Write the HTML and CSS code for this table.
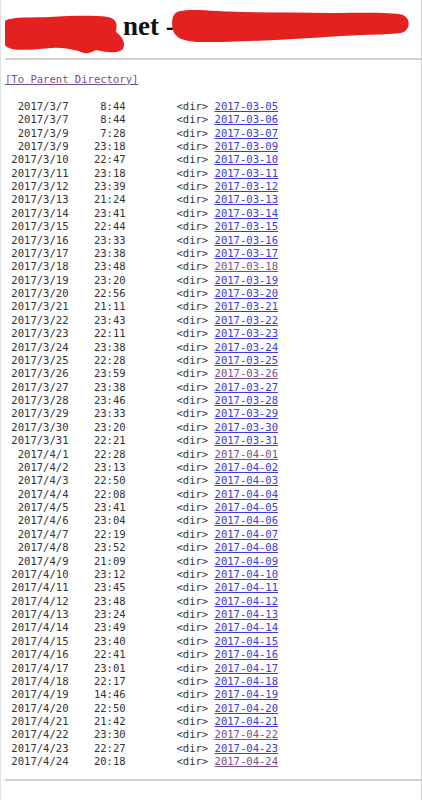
FILE: index.html
```html
<!DOCTYPE html>
<html lang="en">
<head>
    <meta charset="UTF-8">
    <meta name="viewport" content="width=device-width, initial-scale=1.0">
    <title>net - /</title>
    <link rel="stylesheet" href="styles.css">
</head>
<body>
    <h1 class="title">
        <svg class="blot blot-left" width="126" height="40" viewBox="0 0 126 40" aria-hidden="true">
            <path d="M3,8 C10,2 30,4 50,3 C70,2 92,1 108,3 C118,5 117,12 116,18 C122,22 127,30 122,36 C116,40 104,38 96,36 C92,38 88,40 84,39 C78,37 66,33 52,34 C38,35 22,37 12,35 C3,33 -1,24 1,18 C2,13 1,10 3,8 Z" />
        </svg>
        <span class="title-text">net -</span>
        <svg class="blot blot-right" width="240" height="34" viewBox="0 0 240 34" aria-hidden="true">
            <path d="M6,3 C14,0 30,1 46,2 C80,4 120,3 160,4 C190,4 220,3 232,6 C240,10 239,19 233,23 C226,26 200,25 170,27 C140,29 110,31 80,32 C60,33 40,33 26,33 C12,32 4,29 2,21 C0,13 1,6 6,3 Z" />
        </svg>
    </h1>
    <hr>
    <pre class="listing"><a class="seen" href="#">[To Parent Directory]</a><br><br>  2017/3/7     8:44        &lt;dir&gt; <a href="#">2017-03-05</a><br>  2017/3/7     8:44        &lt;dir&gt; <a href="#">2017-03-06</a><br>  2017/3/9     7:28        &lt;dir&gt; <a href="#">2017-03-07</a><br>  2017/3/9    23:18        &lt;dir&gt; <a href="#">2017-03-09</a><br> 2017/3/10    22:47        &lt;dir&gt; <a href="#">2017-03-10</a><br> 2017/3/11    23:18        &lt;dir&gt; <a href="#">2017-03-11</a><br> 2017/3/12    23:39        &lt;dir&gt; <a href="#">2017-03-12</a><br> 2017/3/13    21:24        &lt;dir&gt; <a href="#">2017-03-13</a><br> 2017/3/14    23:41        &lt;dir&gt; <a href="#">2017-03-14</a><br> 2017/3/15    22:44        &lt;dir&gt; <a href="#">2017-03-15</a><br> 2017/3/16    23:33        &lt;dir&gt; <a href="#">2017-03-16</a><br> 2017/3/17    23:38        &lt;dir&gt; <a href="#">2017-03-17</a><br> 2017/3/18    23:48        &lt;dir&gt; <a class="seen" href="#">2017-03-18</a><br> 2017/3/19    23:20        &lt;dir&gt; <a href="#">2017-03-19</a><br> 2017/3/20    22:56        &lt;dir&gt; <a href="#">2017-03-20</a><br> 2017/3/21    21:11        &lt;dir&gt; <a href="#">2017-03-21</a><br> 2017/3/22    23:43        &lt;dir&gt; <a href="#">2017-03-22</a><br> 2017/3/23    22:11        &lt;dir&gt; <a href="#">2017-03-23</a><br> 2017/3/24    23:38        &lt;dir&gt; <a href="#">2017-03-24</a><br> 2017/3/25    22:28        &lt;dir&gt; <a href="#">2017-03-25</a><br> 2017/3/26    23:59        &lt;dir&gt; <a class="seen" href="#">2017-03-26</a><br> 2017/3/27    23:38        &lt;dir&gt; <a href="#">2017-03-27</a><br> 2017/3/28    23:46        &lt;dir&gt; <a href="#">2017-03-28</a><br> 2017/3/29    23:33        &lt;dir&gt; <a href="#">2017-03-29</a><br> 2017/3/30    23:20        &lt;dir&gt; <a href="#">2017-03-30</a><br> 2017/3/31    22:21        &lt;dir&gt; <a href="#">2017-03-31</a><br>  2017/4/1    22:28        &lt;dir&gt; <a class="seen" href="#">2017-04-01</a><br>  2017/4/2    23:13        &lt;dir&gt; <a href="#">2017-04-02</a><br>  2017/4/3    22:50        &lt;dir&gt; <a href="#">2017-04-03</a><br>  2017/4/4    22:08        &lt;dir&gt; <a href="#">2017-04-04</a><br>  2017/4/5    23:41        &lt;dir&gt; <a href="#">2017-04-05</a><br>  2017/4/6    23:04        &lt;dir&gt; <a href="#">2017-04-06</a><br>  2017/4/7    22:19        &lt;dir&gt; <a href="#">2017-04-07</a><br>  2017/4/8    23:52        &lt;dir&gt; <a href="#">2017-04-08</a><br>  2017/4/9    21:09        &lt;dir&gt; <a href="#">2017-04-09</a><br> 2017/4/10    23:12        &lt;dir&gt; <a href="#">2017-04-10</a><br> 2017/4/11    23:45        &lt;dir&gt; <a href="#">2017-04-11</a><br> 2017/4/12    23:48        &lt;dir&gt; <a href="#">2017-04-12</a><br> 2017/4/13    23:24        &lt;dir&gt; <a href="#">2017-04-13</a><br> 2017/4/14    23:49        &lt;dir&gt; <a href="#">2017-04-14</a><br> 2017/4/15    23:40        &lt;dir&gt; <a href="#">2017-04-15</a><br> 2017/4/16    22:41        &lt;dir&gt; <a href="#">2017-04-16</a><br> 2017/4/17    23:01        &lt;dir&gt; <a href="#">2017-04-17</a><br> 2017/4/18    22:17        &lt;dir&gt; <a href="#">2017-04-18</a><br> 2017/4/19    14:46        &lt;dir&gt; <a href="#">2017-04-19</a><br> 2017/4/20    22:50        &lt;dir&gt; <a href="#">2017-04-20</a><br> 2017/4/21    21:42        &lt;dir&gt; <a href="#">2017-04-21</a><br> 2017/4/22    23:30        &lt;dir&gt; <a class="seen" href="#">2017-04-22</a><br> 2017/4/23    22:27        &lt;dir&gt; <a href="#">2017-04-23</a><br> 2017/4/24    20:18        &lt;dir&gt; <a class="seen" href="#">2017-04-24</a><br></pre>
    <hr>
</body>
</html>
```

FILE: styles.css
```css
html {
    min-height: 100vh;
    box-sizing: border-box;
    border-left: 1px solid #e2e2e2;
    border-right: 1px solid #d2d2d2;
}

body {
    margin: 0 0 0 4px;
    background-color: #fff;
    color: #111;
    font-family: "Liberation Serif", serif;
}

/* heading with the redaction marks */
.title {
    display: flex;
    align-items: center;
    height: 58px;
    margin: 0 0 0 -5px;
    font-size: 27px;
    font-weight: bold;
}

.blot path {
    fill: #e4211f;
}

.blot-left {
    margin-top: 10px;
    margin-right: -3px;
}

.title-text {
    margin-top: -6px;
    white-space: pre;
}

.blot-right {
    margin-left: -4px;
    margin-top: -6px;
}

hr {
    border: none;
    border-top: 2px solid #cfcfcf;
    margin: 0;
}

.listing {
    margin: 13px 0 10px 0;
    font-family: "DejaVu Sans Mono", monospace;
    font-size: 10.55px;
    line-height: 13.37px;
    color: #333;
}

.listing a {
    color: #3b3bd8;
    text-decoration: underline;
}

.listing a.seen {
    color: #7a4f8c;
}
```
